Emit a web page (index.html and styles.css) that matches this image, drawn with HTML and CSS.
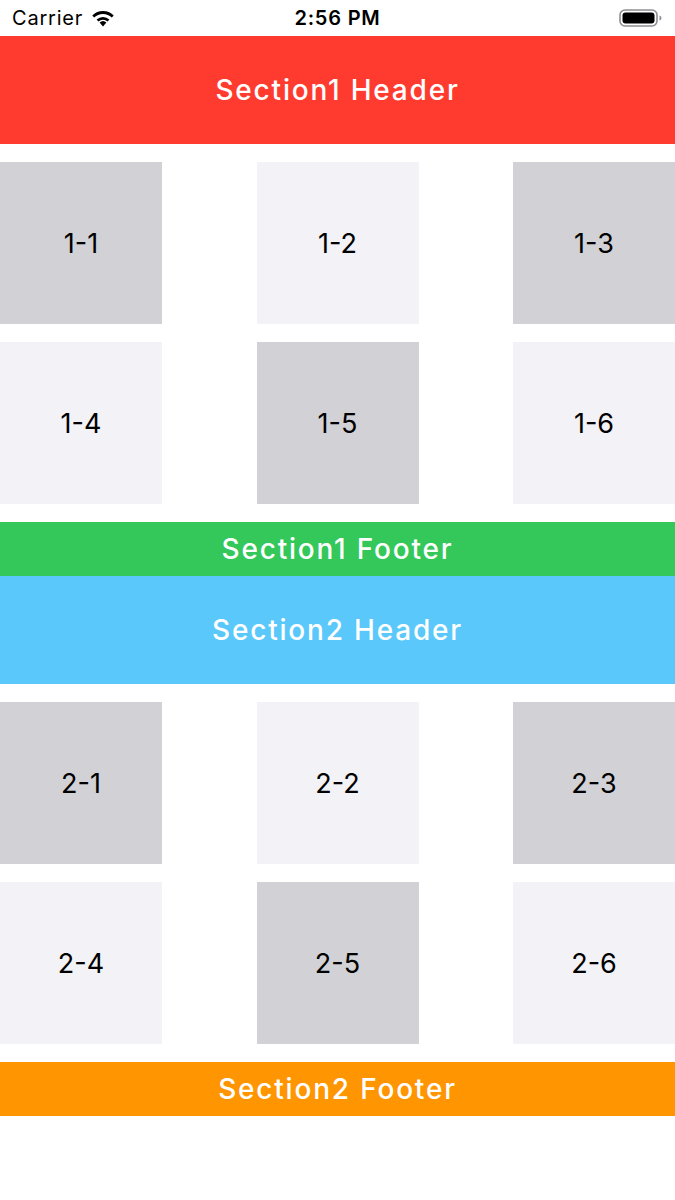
FILE: index.html
```html
<!DOCTYPE html>
<html>
<head>
    <meta charset="UTF-8">
    <title>Sections</title>
    <link rel="stylesheet" href="styles.css">
</head>
<body>
    <!-- Barra de estado -->
    <div class="status-bar">
        <div class="status-left">
            <span>Carrier</span>
            <svg class="wifi" width="26" height="18" viewBox="0 0 26 18">
                <path d="M13 17.5 L9.6 13.6 A5 5 0 0 1 16.4 13.6 Z" fill="#000"/>
                <path d="M6.6 10.6 A9.4 9.4 0 0 1 19.4 10.6 L17.6 12.6 A6.8 6.8 0 0 0 8.4 12.6 Z" fill="#000"/>
                <path d="M2.3 6.4 A15.4 15.4 0 0 1 23.7 6.4 L21.8 8.5 A12.6 12.6 0 0 0 4.2 8.5 Z" fill="#000"/>
            </svg>
        </div>
        <div class="status-time">2:56 PM</div>
        <div class="status-right">
            <svg width="44" height="20" viewBox="0 0 44 20">
                <rect x="1" y="2" width="37" height="16" rx="5" fill="none" stroke="#8e8e93" stroke-width="1.6"/>
                <rect x="3.5" y="4.5" width="32" height="11" rx="3" fill="#000"/>
                <path d="M40.5 7.5 Q42.5 8 42.5 10 Q42.5 12 40.5 12.5 Z" fill="#8e8e93"/>
            </svg>
        </div>
    </div>

    <!-- Sección 1 -->
    <div class="section-header red">Section1 Header</div>
    <div class="grid">
        <div class="cell dark">1-1</div>
        <div class="cell light">1-2</div>
        <div class="cell dark">1-3</div>
        <div class="cell light">1-4</div>
        <div class="cell dark">1-5</div>
        <div class="cell light">1-6</div>
    </div>
    <div class="section-footer green">Section1 Footer</div>

    <!-- Sección 2 -->
    <div class="section-header blue">Section2 Header</div>
    <div class="grid">
        <div class="cell dark">2-1</div>
        <div class="cell light">2-2</div>
        <div class="cell dark">2-3</div>
        <div class="cell light">2-4</div>
        <div class="cell dark">2-5</div>
        <div class="cell light">2-6</div>
    </div>
    <div class="section-footer orange">Section2 Footer</div>
</body>
</html>
```

FILE: styles.css
```css
/* Estilos de la lista por secciones */
body {
    font-family: "Liberation Sans", Arial, sans-serif;
    background-color: #fff;
    margin: 0;
    padding: 0;
}

.status-bar {
    height: 36px;
    display: flex;
    align-items: center;
    justify-content: space-between;
    padding: 0 12px;
    font-family: Inter, "Liberation Sans", sans-serif;
    font-size: 20px;
    letter-spacing: 0.8px;
    color: #000;
}

.status-left {
    width: 150px;
    display: flex;
    align-items: center;
    gap: 7px;
}

.status-time {
    font-weight: 600;
}

.status-right {
    width: 150px;
    display: flex;
    justify-content: flex-end;
}

.section-header,
.section-footer {
    display: flex;
    align-items: center;
    justify-content: center;
    color: #fff;
    font-family: Inter, "Liberation Sans", sans-serif;
    font-size: 28px;
    font-weight: 500;
    letter-spacing: 1.8px;
}

.section-header {
    height: 108px;
}

.section-footer {
    height: 54px;
}

.red { background-color: #ff3b30; }
.green { background-color: #34c759; }
.blue { background-color: #5ac8fa; }
.orange { background-color: #ff9500; }

.grid {
    display: grid;
    grid-template-columns: 162px 162px 162px;
    justify-content: space-between;
    row-gap: 18px;
    padding: 18px 0;
}

.cell {
    height: 162px;
    display: flex;
    align-items: center;
    justify-content: center;
    font-family: Inter, "Liberation Sans", sans-serif;
    font-size: 27px;
    color: #000;
}

.dark { background-color: #d1d1d6; }
.light { background-color: #f2f2f7; }
```
